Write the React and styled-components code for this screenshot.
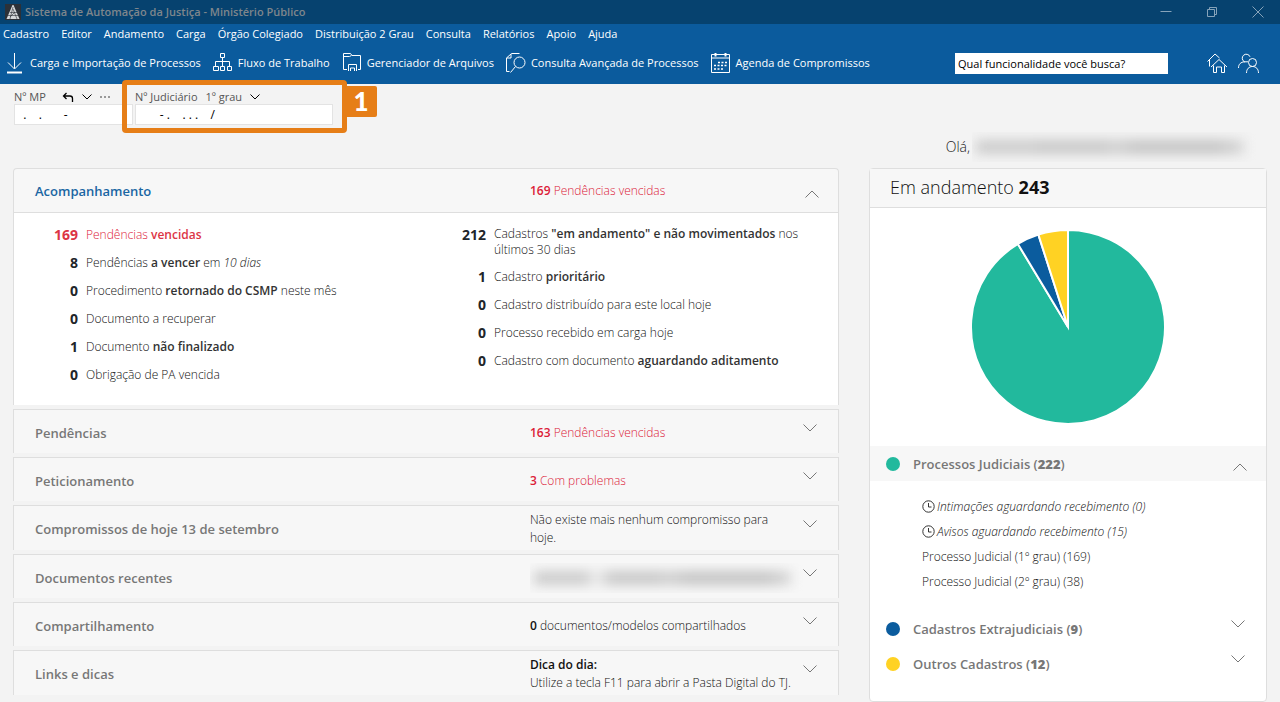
import React, { useState } from 'react';
import styled, { createGlobalStyle } from 'styled-components';

const menus = [
  'Cadastro',
  'Editor',
  'Andamento',
  'Carga',
  'Órgão Colegiado',
  'Distribuição 2 Grau',
  'Consulta',
  'Relatórios',
  'Apoio',
  'Ajuda',
];

const tools = [
  { icon: 'download', label: 'Carga e Importação de Processos' },
  { icon: 'flow', label: 'Fluxo de Trabalho' },
  { icon: 'folder', label: 'Gerenciador de Arquivos' },
  { icon: 'lookup', label: 'Consulta Avançada de Processos' },
  { icon: 'calendar', label: 'Agenda de Compromissos' },
];

const leftCounts = [
  { total: 169, alert: true, text: <>Pendências <b>vencidas</b></> },
  { total: 8, text: <>Pendências <b>a vencer</b> em <i>10 dias</i></> },
  { total: 0, text: <>Procedimento <b>retornado do CSMP</b> neste mês</> },
  { total: 0, text: <>Documento a recuperar</> },
  { total: 1, text: <>Documento <b>não finalizado</b></> },
  { total: 0, text: <>Obrigação de PA vencida</> },
];

const rightCounts = [
  { total: 212, text: <>Cadastros <b>"em andamento" e não movimentados</b> nos últimos 30 dias</> },
  { total: 1, text: <>Cadastro <b>prioritário</b></> },
  { total: 0, text: <>Cadastro distribuído para este local hoje</> },
  { total: 0, text: <>Processo recebido em carga hoje</> },
  { total: 0, text: <>Cadastro com documento <b>aguardando aditamento</b></> },
];

const sections = [
  { title: 'Pendências', alert: true, status: <><b>163</b> Pendências vencidas</> },
  { title: 'Peticionamento', alert: true, status: <><b>3</b> Com problemas</> },
  { title: 'Compromissos de hoje 13 de setembro', status: <>Não existe mais nenhum compromisso para hoje.</> },
  { title: 'Documentos recentes', hidden: true },
  { title: 'Compartilhamento', status: <><b>0</b> documentos/modelos compartilhados</> },
  { title: 'Links e dicas', status: <><b>Dica do dia:</b><br />Utilize a tecla F11 para abrir a Pasta Digital do TJ.</> },
];

const groups = [
  { title: 'Processos Judiciais', total: 222, color: '#22b99d' },
  { title: 'Cadastros Extrajudiciais', total: 9, color: '#0b5c9e' },
  { title: 'Outros Cadastros', total: 12, color: '#ffd223' },
];

const icons = {
  download: (
    <>
      <path d='M11.5 1v15.5M5 10.5l6.500 6.500 6.500-6.500' />
      <path d='M4 20.500h15' strokeWidth='2' />
    </>
  ),
  flow: (
    <>
      <path d='M9.500 1.500h4v4h-4zM2.500 14.500h5v4h-5zM9.500 14.500h4v4h-4zM16.500 14.500h4v4h-4z' />
      <path d='M11.500 5.500v9M4.500 14.500v-5h14v5' />
    </>
  ),
  folder: (
    <>
      <path d='M7 17.500H3.500v-16h7l1.500 2h8.500v14H18' />
      <path d='M3.500 4.500h6l2-1M8.500 19v-6.500h8V19M10.500 19v-3h4v3' />
    </>
  ),
  lookup: (
    <>
      <path d='M5.500 19.500h-3V6l5-4.500h8M2.500 6h4.500V2' />
      <circle cx='15.500' cy='10.500' r='5.500' />
      <path d='M11.500 14.500l-5 6' />
    </>
  ),
  calendar: (
    <>
      <path d='M2.500 2.500h18v18h-18z' />
      <path d='M2.500 6h18' />
      <path d='M6.500 1v3.500M16.500 1v3.500' strokeWidth='2' />
      <path d='M9 10.500h10M5 13.500h14M5 17h10' strokeWidth='1.500' strokeDasharray='2 1.500' />
    </>
  ),
  home: (
    <>
      <path d='M1.500 9.500L9 2l4.500 4M3.500 8v6.500' />
      <path d='M5 15L13 7.500l8 7.500M7.500 13.500v7h3V15h5v5.500h3v-7' />
    </>
  ),
  people: (
    <>
      <path d='M.5 16c0-4 2.500-6 6-6.200a4 4 0 1 1 5.500-5' />
      <path d='M6 9.800h4' />
      <circle cx='14.500' cy='10.500' r='4' />
      <path d='M8.500 21c0-4 2.500-6.500 6-6.500s6 2.500 6 6.500' />
    </>
  ),
};

const Icon = ({ name }) => (
  <IconBox viewBox='0 0 22 22' aria-hidden='true'>
    {icons[name]}
  </IconBox>
);

const Chevron = ({ up }) => (
  <ChevronBox $up={up} viewBox='0 0 14 8' aria-hidden='true'>
    <path d={up ? 'M.5 7.500l6.500-6.500 6.500 6.500' : 'M.5.5l6.500 6.500L13.500.5'} />
  </ChevronBox>
);

const Clock = () => (
  <ClockBox viewBox='0 0 13 13' aria-hidden='true'>
    <circle cx='6.500' cy='6.500' r='5.700' />
    <path d='M6.500 3v4h3' />
  </ClockBox>
);

const Pie = ({ data }) => {
  const sum = data.reduce((acc, { total }) => acc + total, 0);
  const point = (part) => {
    const angle = (part / sum) * Math.PI * 2;
    return `${98 + 97 * Math.sin(angle)} ${98 - 97 * Math.cos(angle)}`;
  };
  let start = 0;
  return (
    <PieBox viewBox='0 0 196 196' role='img' aria-label='Em andamento'>
      {data.map(({ title, total, color }) => {
        const from = start;
        start += total;
        const large = total > sum / 2 ? 1 : 0;
        return <path key={title} fill={color} d={`M98 98L${point(from)}A97 97 0 ${large} 1 ${point(start)}Z`} />;
      })}
    </PieBox>
  );
};

const Counts = ({ items }) => (
  <CountList>
    {items.map(({ total, alert, text }, index) => (
      <CountItem key={index} $alert={alert}>
        <strong>{total}</strong>
        <span>{text}</span>
      </CountItem>
    ))}
  </CountList>
);

const App = () => {
  const [open, setOpen] = useState(true);
  const [groupOpen, setGroupOpen] = useState(true);

  return (
    <>
      <GlobalStyle />
      <TitleBar>
        <Logo viewBox='0 0 16 16' aria-hidden='true'>
          <path fill='#2c3138' stroke='none' d='M0 0h16v16H0z' />
          <path fill='#d5d8db' stroke='none' d='M7.500 1h1l6 14h-13z' />
          <path stroke='#2c3138' strokeWidth='.6' d='M5 8.500h7M3 11.500h10M8 3L5 15M8 5l4 10M10 8l-5 5' />
        </Logo>
        <h1>Sistema de Automação da Justiça - Ministério Público</h1>
        <WindowButtons>
          <button type='button' aria-label='Minimizar'>
            <svg viewBox='0 0 12 12'><path d='M.5 5.500h11' /></svg>
          </button>
          <button type='button' aria-label='Restaurar'>
            <svg viewBox='0 0 12 12'><path d='M1.500 3.500h7v7h-7zM3.500 3V1.500h7v7H9' /></svg>
          </button>
          <button type='button' aria-label='Fechar'>
            <svg viewBox='0 0 12 12'><path d='M.5.5l11 11M11.500.5l-11 11' /></svg>
          </button>
        </WindowButtons>
      </TitleBar>

      <Header>
        <Menu>
          {menus.map((menu) => (
            <button type='button' key={menu}>{menu}</button>
          ))}
        </Menu>
        <Toolbar>
          {tools.map(({ icon, label }) => (
            <Tool type='button' key={icon}>
              <Icon name={icon} />
              {label}
            </Tool>
          ))}
          <Search aria-label='Busca' defaultValue='Qual funcionalidade você busca?' />
          <Tool type='button' aria-label='Início'><Icon name='home' /></Tool>
          <Tool type='button' aria-label='Usuários'><Icon name='people' /></Tool>
        </Toolbar>
      </Header>

      <Filters>
        <Field $width='119px'>
          <FieldHead>
            <label htmlFor='mp'>Nº MP</label>
            <SmallButton type='button' aria-label='Desfazer' $first>
              <svg width='12' height='11' viewBox='0 0 12 11'>
                <path d='M4.500 1L1.500 4l3 3M1.500 4H8c1.500 0 2.500 1 2.500 2.500V10' strokeWidth='1.300' />
              </svg>
            </SmallButton>
            <SmallButton type='button' aria-label='Histórico'>
              <svg width='10' height='6' viewBox='0 0 10 6'><path d='M.5.5L5 5 9.500.5' /></svg>
            </SmallButton>
            <SmallButton type='button' aria-label='Mais'>
              <svg width='11' height='6' viewBox='0 0 11 6'>
                <path d='M0 3h11' stroke='#999' strokeWidth='2' strokeDasharray='2 2' />
              </svg>
            </SmallButton>
          </FieldHead>
          <input id='mp' defaultValue='  .    .       -' />
        </Field>
        <Field $width='198px'>
          <FieldHead>
            <label htmlFor='judiciario'>Nº Judiciário</label>
            <DegreeButton type='button'>
              1º grau
              <svg width='10' height='6' viewBox='0 0 10 6'><path d='M.5.5L5 5 9.500.5' /></svg>
            </DegreeButton>
          </FieldHead>
          <input id='judiciario' defaultValue='       - .    . . .    /' />
          <Highlight />
          <Badge>1</Badge>
        </Field>
      </Filters>

      <Greeting>
        Olá,
        <Redacted $width='284px' $name />
      </Greeting>

      <Page>
        <div>
          <Panel $first>
            <SectionHead type='button' $active onClick={() => setOpen(!open)} aria-expanded={open}>
              <h2>Acompanhamento</h2>
              <Status $alert><b>169</b> Pendências vencidas</Status>
              <Chevron up={open} />
            </SectionHead>
            {open && (
              <PanelBody>
                <Counts items={leftCounts} />
                <Counts items={rightCounts} />
              </PanelBody>
            )}
          </Panel>
          {sections.map(({ title, status, alert, hidden }) => (
            <Panel key={title}>
              <SectionHead type='button' aria-expanded='false'>
                <h2>{title}</h2>
                {hidden ? <Redacted $width='100%' /> : <Status $alert={alert}>{status}</Status>}
                <Chevron />
              </SectionHead>
            </Panel>
          ))}
        </div>

        <Summary>
          <SummaryTitle>Em andamento <b>243</b></SummaryTitle>
          <Pie data={groups} />
          {groups.map(({ title, total, color }, index) => {
            const expanded = index === 0 && groupOpen;
            return (
              <div key={title}>
                <GroupHead
                  type='button'
                  $active={expanded}
                  aria-expanded={expanded}
                  onClick={() => index === 0 && setGroupOpen(!groupOpen)}
                >
                  <Dot $color={color} />
                  <h2>{title} (<b>{total}</b>)</h2>
                  <Chevron up={expanded} />
                </GroupHead>
                {expanded && (
                  <GroupList>
                    <li><Clock /><i>Intimações aguardando recebimento (0)</i></li>
                    <li><Clock /><i>Avisos aguardando recebimento (15)</i></li>
                    <li>Processo Judicial (1º grau) (169)</li>
                    <li>Processo Judicial (2º grau) (38)</li>
                  </GroupList>
                )}
              </div>
            );
          })}
        </Summary>
      </Page>
    </>
  );
};

const GlobalStyle = createGlobalStyle`
  * {
    box-sizing: border-box;
  }
  body {
    margin: 0;
    background: #f3f3f3;
    color: #222;
    font: 11px/16px 'Open Sans', 'Noto Sans', sans-serif;
  }
  button,
  input {
    margin: 0;
    padding: 0;
    border: 0;
    background: none;
    color: inherit;
    font: inherit;
    text-align: left;
  }
  h1,
  h2,
  ul {
    margin: 0;
    padding: 0;
    list-style: none;
  }
  svg {
    flex: none;
    fill: none;
    stroke: currentColor;
  }
`;

const IconBox = styled.svg`
  width: 22px;
  height: 22px;
`;

const ChevronBox = styled.svg`
  width: 14px;
  height: 8px;
  color: #777;
  margin: ${({ $up }) => ($up ? '6px -2px 0 2px' : '-10px 0 0')};
`;

const ClockBox = styled.svg`
  width: 13px;
  height: 13px;
  margin-right: 2px;
  color: #333;
`;

const PieBox = styled.svg`
  display: block;
  width: 196px;
  margin: 21px auto;
  stroke: #fff;
  stroke-width: 2px;
`;

const TitleBar = styled.header`
  display: flex;
  align-items: center;
  gap: 4px;
  height: 24px;
  padding: 0 16px 0 5px;
  background: #06426f;
  color: #7f868c;
  h1 {
    flex: 1;
    font-size: 11px;
    font-weight: 600;
  }
`;

const Logo = styled.svg`
  width: 16px;
  height: 16px;
`;

const WindowButtons = styled.div`
  display: flex;
  gap: 34px;
  color: #86a3ba;
  button {
    height: 18px;
  }
  svg {
    display: block;
    width: 12px;
    height: 12px;
  }
`;

const Header = styled.div`
  height: 60px;
  background: #0b5b9d;
  color: #fff;
`;

const Menu = styled.nav`
  display: flex;
  gap: 12px;
  padding: 2px 3px 0;
`;

const Toolbar = styled.div`
  display: flex;
  align-items: center;
  gap: 10px;
  padding: 10px 20px 0 3px;
`;

const Tool = styled.button`
  display: flex;
  align-items: center;
  gap: 5px;
  white-space: nowrap;
`;

const Search = styled.input`
  width: 213px;
  height: 21px;
  margin: 0 28px 0 auto;
  padding: 0 3px;
  background: #fff;
  color: #000;
`;

const Filters = styled.form`
  display: flex;
  gap: 2px;
  padding: 4px 14px 0;
`;

const Field = styled.div`
  position: relative;
  width: ${({ $width }) => $width};
  input {
    width: 100%;
    height: 21px;
    padding: 0 2px;
    border: 1px solid #e3e3e3;
    background: #fff;
    color: #000;
    font-size: 12px;
  }
`;

const FieldHead = styled.div`
  display: flex;
  align-items: center;
  gap: 8px;
  height: 16px;
  padding-top: 2px;
  color: #555;
`;

const SmallButton = styled.button`
  display: flex;
  margin-left: ${({ $first }) => ($first ? '8px' : '0')};
  color: #000;
`;

const DegreeButton = styled.button`
  display: flex;
  align-items: center;
  gap: 8px;
  svg {
    color: #000;
  }
`;

const Highlight = styled.span`
  position: absolute;
  top: -8px;
  left: -13px;
  width: 225px;
  height: 53px;
  border: 5px solid #e67e17;
  border-radius: 4px;
  pointer-events: none;
`;

const Badge = styled.span`
  position: absolute;
  top: -2px;
  left: 210px;
  width: 32px;
  height: 31px;
  border-radius: 2px;
  background: #e67e17;
  color: #fff;
  font-family: Lato, sans-serif;
  font-size: 26px;
  font-weight: 900;
  line-height: 31px;
  text-align: center;
`;

const Greeting = styled.div`
  display: flex;
  justify-content: flex-end;
  align-items: center;
  gap: 2px;
  height: 43px;
  padding-right: 24px;
  font-size: 14px;
  font-weight: 300;
`;

const Redacted = styled.span`
  position: relative;
  width: ${({ $width }) => $width};
  height: 30px;
  overflow: hidden;
  &::after {
    content: '';
    position: absolute;
    inset: 8px 12px 8px 4px;
    background: linear-gradient(
      90deg,
      #ccc 0 20%,
      ${({ $name }) => ($name ? '#c8c8c8' : '#eee')} 24%,
      #c8c8c8 30% 48%,
      #d0d0d0 52%,
      #c4c4c4 60% 90%,
      #d8d8d8
    );
    filter: blur(6px);
  }
`;

const Page = styled.main`
  display: grid;
  grid-template-columns: minmax(0, 1fr) 398px;
  gap: 30px;
  align-items: start;
  padding: 0 13px;
  font-size: 12px;
  font-weight: 300;
`;

const Panel = styled.section`
  margin-bottom: 4px;
  border: 1px solid #dedede;
  border-bottom: 0;
  border-radius: ${({ $first }) => ($first ? '4px 4px 0 0' : '0')};
  background: #f7f7f7;
`;

const SectionHead = styled.button`
  display: grid;
  grid-template-columns: 29fr 16fr 14px;
  align-items: center;
  width: 100%;
  min-height: 43px;
  padding: ${({ $active }) => ($active ? '4px 21px' : '5px 21px 3px')};
  color: ${({ $active }) => ($active ? '#1a66a3' : '#777')};
  h2 {
    font-size: 13px;
    font-weight: 600;
  }
`;

const Status = styled.span`
  padding-right: 10px;
  color: ${({ $alert }) => ($alert ? '#dc2038' : '#111')};
  line-height: 18px;
  b {
    font-weight: 600;
  }
`;

const PanelBody = styled.div`
  display: grid;
  grid-template-columns: 1fr 1fr;
  gap: 12px;
  padding: 13px 0 21px 20px;
  border-top: 1px solid #dedede;
  background: #fff;
`;

const CountList = styled.ul`
  display: flex;
  flex-direction: column;
  gap: 10px;
`;

const CountItem = styled.li`
  display: grid;
  grid-template-columns: 44px minmax(0, 308px);
  align-items: center;
  gap: 8px;
  min-height: 18px;
  color: ${({ $alert }) => ($alert ? '#dc2038' : '#111')};
  b {
    color: ${({ $alert }) => ($alert ? '#dc3545' : '#333')};
    font-weight: 600;
  }
  strong {
    align-self: start;
    color: ${({ $alert }) => ($alert ? '#dc3545' : '#212529')};
    font-size: 14px;
    font-weight: 700;
    line-height: 18px;
    text-align: right;
  }
`;

const Summary = styled.aside`
  padding-bottom: 20px;
  border: 1px solid #dedede;
  border-radius: 4px;
  background: #fff;
`;

const SummaryTitle = styled.h2`
  padding: 6px 20px 8px;
  border-bottom: 1px solid #dedede;
  background: #f7f7f7;
  color: #111;
  font-size: 18px;
  font-weight: 300;
  line-height: 24px;
  b {
    font-weight: 700;
  }
`;

const GroupHead = styled.button`
  display: flex;
  align-items: center;
  gap: 13px;
  width: 100%;
  height: 35px;
  padding: 0 21px 0 16px;
  background: ${({ $active }) => ($active ? '#f7f7f7' : '#fff')};
  color: #777;
  h2 {
    flex: 1;
    font-size: 13px;
    font-weight: 600;
  }
`;

const Dot = styled.span`
  width: 14px;
  height: 14px;
  border-radius: 50%;
  background: ${({ $color }) => $color};
`;

const GroupList = styled.ul`
  padding: 13px 20px 17px 52px;
  color: #111;
  li {
    display: flex;
    align-items: center;
    height: 25px;
  }
`;

export default App;
